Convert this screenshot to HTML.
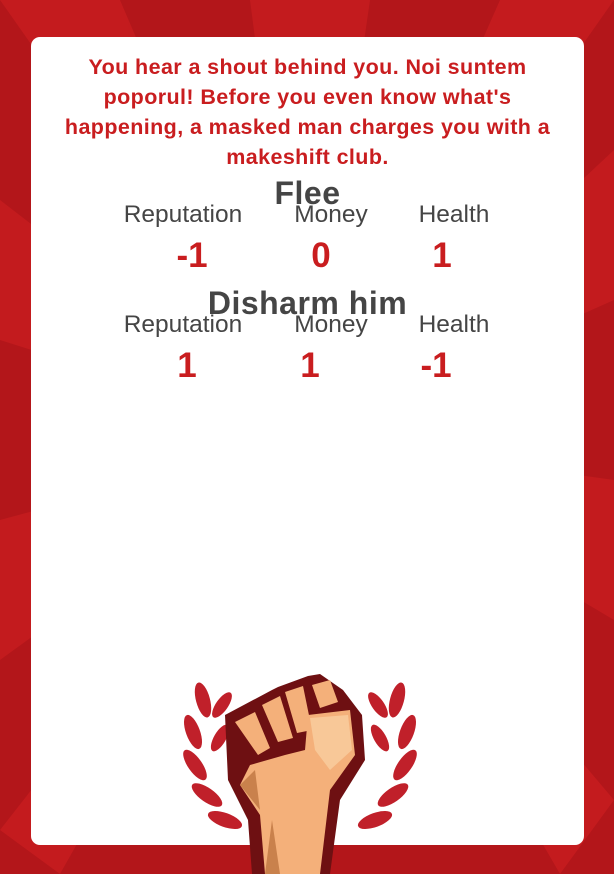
<!DOCTYPE html>
<html><head><meta charset="utf-8"><style>
html,body{margin:0;padding:0;width:614px;height:874px;overflow:hidden;}
body{background:#b9161a;position:relative;font-family:"Liberation Sans",Arial,sans-serif;}
#bg{position:absolute;left:0;top:0}
.card{position:absolute;left:31px;top:37px;width:553px;height:808px;background:#fff;border-radius:9px;overflow:hidden}
.intro{position:absolute;left:18px;width:517px;top:15px;text-align:center;color:#c91d1f;font-weight:bold;font-size:21.5px;letter-spacing:0.4px;line-height:30px}
.t{position:absolute;left:0;width:553px;text-align:center;color:#454545;font-weight:bold;font-size:32px;letter-spacing:0.5px}
.l{position:absolute;color:#454545;font-size:24.5px;transform:translateX(-50%);white-space:nowrap}
.v{position:absolute;color:#c91d1f;font-weight:bold;font-size:35px;transform:translateX(-50%)}
</style></head><body>
<svg id="bg" width="614" height="874" viewBox="0 0 614 874">
<rect width="614" height="874" fill="#b3161a"/>
<g fill="#c81d1f" opacity="0.8">
<polygon points="307,437 0,0 120,0"/>
<polygon points="307,437 250,0 370,0"/>
<polygon points="307,437 500,0 614,0"/>
<polygon points="307,437 614,150 614,300"/>
<polygon points="307,437 614,480 614,620"/>
<polygon points="307,437 614,800 560,874"/>
<polygon points="307,437 0,200 0,340"/>
<polygon points="307,437 0,520 0,660"/>
<polygon points="307,437 0,830 60,874"/>
</g>
</svg>
<div class="card">
<div class="intro">You hear a shout behind you. Noi suntem poporul! Before you even know what's happening, a masked man charges you with a makeshift club.</div>
<div class="t" style="top:138px">Flee</div>
<div class="l" style="left:152px;top:164px">Reputation</div>
<div class="l" style="left:300px;top:164px">Money</div>
<div class="l" style="left:423px;top:164px">Health</div>
<div class="v" style="left:161px;top:199px">-1</div>
<div class="v" style="left:290px;top:199px">0</div>
<div class="v" style="left:411px;top:199px">1</div>
<div class="t" style="top:248px">Disharm him</div>
<div class="l" style="left:152px;top:274px">Reputation</div>
<div class="l" style="left:300px;top:274px">Money</div>
<div class="l" style="left:423px;top:274px">Health</div>
<div class="v" style="left:156px;top:309px">1</div>
<div class="v" style="left:279px;top:309px">1</div>
<div class="v" style="left:405px;top:309px">-1</div>
</div>
<svg style="position:absolute;left:180px;top:660px" width="240" height="214" viewBox="0 0 240 214">
<g fill="#c0202a">
<ellipse cx="23" cy="40" rx="7" ry="18" transform="rotate(-15 23 40)"/>
<ellipse cx="13" cy="72" rx="7" ry="18" transform="rotate(-20 13 72)"/>
<ellipse cx="15" cy="105" rx="7" ry="18" transform="rotate(-35 15 105)"/>
<ellipse cx="27" cy="135" rx="7" ry="18" transform="rotate(-55 27 135)"/>
<ellipse cx="45" cy="160" rx="7" ry="18" transform="rotate(-70 45 160)"/>
<ellipse cx="42" cy="45" rx="6" ry="15" transform="rotate(35 42 45)"/>
<ellipse cx="40" cy="78" rx="6" ry="15" transform="rotate(30 40 78)"/>
<ellipse cx="217" cy="40" rx="7" ry="18" transform="rotate(15 217 40)"/>
<ellipse cx="227" cy="72" rx="7" ry="18" transform="rotate(20 227 72)"/>
<ellipse cx="225" cy="105" rx="7" ry="18" transform="rotate(35 225 105)"/>
<ellipse cx="213" cy="135" rx="7" ry="18" transform="rotate(55 213 135)"/>
<ellipse cx="195" cy="160" rx="7" ry="18" transform="rotate(70 195 160)"/>
<ellipse cx="198" cy="45" rx="6" ry="15" transform="rotate(-35 198 45)"/>
<ellipse cx="200" cy="78" rx="6" ry="15" transform="rotate(-30 200 78)"/>
</g>
<path d="M45 55 L92 30 L98 27 L128 16 L140 14 L163 30 L182 55 L185 100 L160 140 L150 214 L72 214 L68 160 L48 120 Z" fill="#6e1012"/>
<path d="M55 62 L75 52 L90 88 L78 95 Z M82 45 L100 36 L113 78 L98 82 Z M105 32 L123 26 L132 70 L117 73 Z M132 25 L150 20 L158 42 L140 48 Z" fill="#f4b07a"/>
<path d="M128 55 L170 50 L175 95 L150 130 L140 214 L85 214 L80 155 L60 125 L70 105 L105 95 L125 90 Z" fill="#f4b07a"/>
<path d="M130 58 L168 55 L172 90 L150 110 L135 90 Z" fill="#f8c898"/>
<path d="M85 214 L92 160 L100 214 Z M60 125 L80 150 L75 110 Z" fill="#c9814c"/>
</svg>
</body></html>
